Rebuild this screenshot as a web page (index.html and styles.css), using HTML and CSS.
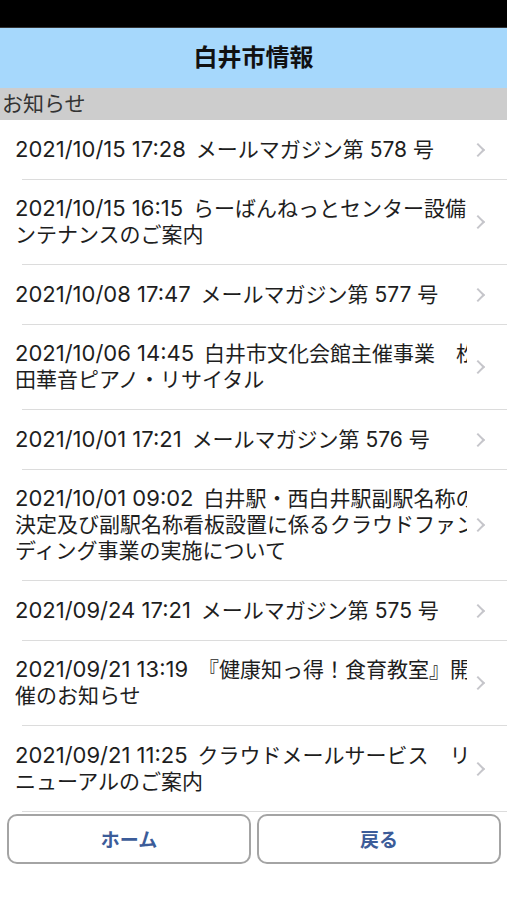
FILE: index.html
```html
<!DOCTYPE html>
<html lang="ja">
<head>
    <meta charset="UTF-8">
    <meta name="viewport" content="width=device-width, initial-scale=1.0">
    <title>白井市情報</title>
    <link rel="stylesheet" href="styles.css">
</head>
<body>
    <div class="status-bar"></div>
    <header class="nav-bar">白井市情報</header>
    <div class="section-header">お知らせ</div>

    <ul class="news-list">
        <li class="news-item">
            <div class="news-clip"><span class="news-title"><span class="news-date">2021/10/15 17:28</span> メールマガジン第 578 号</span></div>
            <span class="chevron"></span>
        </li>
        <li class="news-item">
            <div class="news-clip"><span class="news-title"><span class="news-date">2021/10/15 16:15</span> らーばんねっとセンター設備メンテナンスのご案内</span></div>
            <span class="chevron"></span>
        </li>
        <li class="news-item">
            <div class="news-clip"><span class="news-title"><span class="news-date">2021/10/08 17:47</span> メールマガジン第 577 号</span></div>
            <span class="chevron"></span>
        </li>
        <li class="news-item">
            <div class="news-clip"><span class="news-title"><span class="news-date">2021/10/06 14:45</span> 白井市文化会館主催事業　松田華音ピアノ・リサイタル</span></div>
            <span class="chevron"></span>
        </li>
        <li class="news-item">
            <div class="news-clip"><span class="news-title"><span class="news-date">2021/10/01 17:21</span> メールマガジン第 576 号</span></div>
            <span class="chevron"></span>
        </li>
        <li class="news-item">
            <div class="news-clip"><span class="news-title"><span class="news-date">2021/10/01 09:02</span> 白井駅・西白井駅副駅名称の決定及び副駅名称看板設置に係るクラウドファンディング事業の実施について</span></div>
            <span class="chevron"></span>
        </li>
        <li class="news-item">
            <div class="news-clip"><span class="news-title"><span class="news-date">2021/09/24 17:21</span> メールマガジン第 575 号</span></div>
            <span class="chevron"></span>
        </li>
        <li class="news-item">
            <div class="news-clip"><span class="news-title"><span class="news-date">2021/09/21 13:19</span> 『健康知っ得！食育教室』開催のお知らせ</span></div>
            <span class="chevron"></span>
        </li>
        <li class="news-item">
            <div class="news-clip"><span class="news-title"><span class="news-date">2021/09/21 11:25</span> クラウドメールサービス　リニューアルのご案内</span></div>
            <span class="chevron"></span>
        </li>
    </ul>

    <div class="button-bar">
        <button class="nav-btn">ホーム</button>
        <button class="nav-btn">戻る</button>
    </div>
</body>
</html>
```

FILE: styles.css
```css
body {
    margin: 0;
    font-family: "Liberation Sans", "Noto Sans CJK JP", sans-serif;
    color: #222;
    background-color: #fff;
}

.status-bar {
    height: 27px;
    background-color: #000;
    border-bottom: 1px solid #333;
}

.nav-bar {
    height: 60px;
    line-height: 60px;
    background-color: #a6d8fc;
    text-align: center;
    font-size: 24px;
    font-weight: bold;
    color: #111;
}

.section-header {
    height: 32px;
    line-height: 32px;
    padding-left: 2px;
    background-color: #cdcdcd;
    font-size: 21px;
    color: #333;
}

.news-list {
    list-style: none;
    margin: 0;
    padding: 0;
}

.news-item {
    display: flex;
    align-items: center;
    padding: 16.75px 0 16.75px 15px;
    background: linear-gradient(#dcdcdc, #dcdcdc) no-repeat 22px 100% / calc(100% - 22px) 1px;
}

/* long titles run on under the chevron, as in the app */
.news-clip {
    flex: 1;
    min-width: 0;
    overflow: hidden;
}

.news-title {
    display: block;
    width: 474px;
    font-family: Inter, "Noto Sans CJK JP", sans-serif;
    font-size: 21px;
    line-height: 26px;
    color: #1e1e1e;
    font-variant-numeric: proportional-nums;
}

.news-date {
    font-size: 22px;
    line-height: 18px;
    margin-right: 4px;
}

.chevron {
    flex: 0 0 40px;
    height: 14px;
    position: relative;
}

.chevron::after {
    content: "";
    position: absolute;
    left: 6px;
    top: 2px;
    width: 8px;
    height: 8px;
    border-top: 2px solid #c6c6cb;
    border-right: 2px solid #c6c6cb;
    transform: rotate(45deg);
}

.button-bar {
    display: flex;
    gap: 6px;
    padding: 2px 6px 0 7px;
}

.nav-btn {
    flex: 1;
    height: 50px;
    background-color: #fff;
    border: 2px solid #a4a4a4;
    border-radius: 10px;
    font-family: "Liberation Sans", "Noto Sans CJK JP", sans-serif;
    font-size: 19px;
    font-weight: bold;
    color: #3c5c99;
}
```
